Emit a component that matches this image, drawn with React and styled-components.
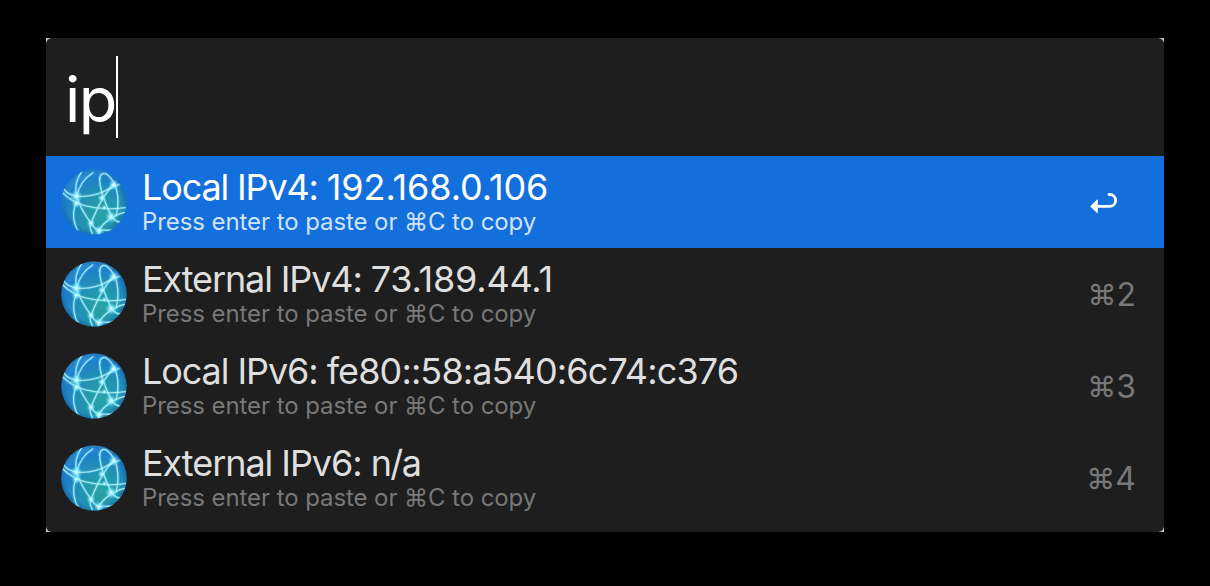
import React from "react";
import styled, { createGlobalStyle } from "styled-components";

const GlobalStyle = createGlobalStyle`
  body {
    margin: 0;
    background: #000;
    font-family: Inter, "Liberation Sans", sans-serif;
  }
`;

const Screen = styled.main`
  box-sizing: border-box;
  height: 586px;
  padding: 38px 46px 54px;
  background: #000;
`;

const Backdrop = styled.div`
  height: 494px;
  background: #c4c4c4;
`;

const Panel = styled.section`
  height: 100%;
  border-radius: 6px;
  overflow: hidden;
  background: #1e1e1e;
`;

const SearchBar = styled.div`
  display: flex;
  align-items: flex-start;
  height: 118px;
  box-sizing: border-box;
  padding: 18px 0 0 19px;
`;

const Query = styled.span`
  width: 51px;
  font-size: 63px;
  line-height: 86px;
  font-weight: 370;
  letter-spacing: -1.4px;
  color: #fff;
`;

const Caret = styled.span`
  width: 2px;
  height: 82px;
  background: #fff;
`;

const Row = styled.div`
  display: flex;
  align-items: center;
  height: 92px;
  box-sizing: border-box;
  padding: 0 28px 0 14px;
  background: ${(p) => (p.$active ? "#136fdc" : "transparent")};
`;

const Labels = styled.div`
  flex: 1;
  padding: 0 0 2px 14px;
`;

const Title = styled.div`
  font-size: 36px;
  line-height: 40px;
  font-weight: 430;
  white-space: pre;
  color: ${(p) => (p.$active ? "#fff" : "#dfdfdf")};
`;

const Tracked = styled.span`
  letter-spacing: ${(p) => p.$tracking}px;
`;

const Subtitle = styled.div`
  padding-top: 1px;
  font-size: 24px;
  line-height: 28px;
  font-weight: 440;
  letter-spacing: -0.08px;
  white-space: nowrap;
  color: ${(p) => (p.$active ? "#d0e2f8" : "#787878")};
`;

const Shortcut = styled.div`
  display: flex;
  align-items: center;
  gap: 1px;
  padding-top: 2px;
  font-size: 32px;
  line-height: 40px;
  font-weight: 440;
  color: #787878;
`;

const Modifier = styled.span`
  font-size: 29px;
  letter-spacing: -1px;
  line-height: 40px;
`;

const GlobeSvg = styled.svg`
  flex: none;
  width: 68px;
  height: 68px;
`;

const ReturnSvg = styled.svg`
  width: 28px;
  height: 24px;
  margin: 3px 18px 0 0;
`;

const arcs = [
  "M31 83C37 93 50 99 67 102C104 106 151 96 179 68",
  "M26 92C48 115 67 123 92 131C130 141 180 143 214 137",
  "M82 31C66 51 62 80 68 103C76 133 94 160 111 184C119 196 129 204 137 208",
  "M66 124C54 150 58 185 73 208",
  "M68 103C74 75 92 48 116 33",
  "M137 49C139 35 150 29 162 40C188 63 199 106 187 160",
  "M137 49C136 79 155 129 171 160C179 175 190 181 204 181",
  "M179 68C151 94 130 135 111 184C107 193 109 205 115 214",
  "M212 151C180 158 145 184 135 205L134 218",
  "M195 68C185 72 177 72 170 80",
  "M135 206C151 203 165 206 176 204",
];

const nodes = [
  [67, 103, 20],
  [67, 124, 15],
  [179, 68, 17],
  [143, 108, 13],
  [111, 184, 14],
  [171, 164, 19],
  [135, 206, 17],
  [151, 137, 9],
];

function Globe({ id }) {
  return (
    <GlobeSvg viewBox="18 18 204 204" aria-hidden="true">
      <defs>
        <radialGradient id={`${id}-sea`} cx="60%" cy="68%" r="75%">
          <stop offset="0" stopColor="#2aa5a2" />
          <stop offset="0.4" stopColor="#2392b0" />
          <stop offset="0.75" stopColor="#1f7fca" />
          <stop offset="1" stopColor="#3a9ee6" />
        </radialGradient>
        <radialGradient id={`${id}-edge`} cx="50%" cy="50%" r="50%">
          <stop offset="0.84" stopColor="#0b4f91" stopOpacity="0" />
          <stop offset="1" stopColor="#0b4f91" stopOpacity="0.4" />
        </radialGradient>
        <radialGradient id={`${id}-node`}>
          <stop offset="0" stopColor="#f2ffff" />
          <stop offset="0.35" stopColor="#a8f5ff" stopOpacity="0.75" />
          <stop offset="1" stopColor="#4bd9f5" stopOpacity="0" />
        </radialGradient>
        <clipPath id={`${id}-clip`}>
          <circle cx="120" cy="120.5" r="98" />
        </clipPath>
      </defs>
      <circle cx="120" cy="120.5" r="98" fill={`url(#${id}-sea)`} />
      <circle cx="120" cy="120.5" r="98" fill={`url(#${id}-edge)`} />
      <g clipPath={`url(#${id}-clip)`} fill="none" strokeLinecap="round">
        {arcs.map((d) => (
          <path key={d} d={d} stroke="#4fdcf5" strokeOpacity="0.25" strokeWidth="11" />
        ))}
        {arcs.map((d) => (
          <path key={d} d={d} stroke="#c4f4fc" strokeOpacity="0.82" strokeWidth="4" />
        ))}
        {nodes.map(([x, y, r]) => (
          <circle key={`${x}-${y}`} cx={x} cy={y} r={r} fill={`url(#${id}-node)`} />
        ))}
      </g>
    </GlobeSvg>
  );
}

function ReturnIcon() {
  return (
    <ReturnSvg viewBox="0 0 28 24" role="img" aria-label="Return">
      <path
        d="M6 14.3H19.2C23 14.3 25.6 11.8 25.6 8.4C25.6 5 23 2.5 19.7 2.5H19"
        fill="none"
        stroke="#fff"
        strokeWidth="2.8"
        strokeLinecap="round"
      />
      <path
        d="M1.2 13.5L7.4 7.8V20.8L1.2 15.1Q0.4 14.3 1.2 13.5Z"
        fill="#fff"
        stroke="#fff"
        strokeWidth="0.8"
        strokeLinejoin="round"
      />
    </ReturnSvg>
  );
}

const results = [
  { label: "Local IPv4: ", value: "192.168.0.106", tracking: [-1.15, -0.1] },
  { label: "External IPv4: ", value: "73.189.44.1", tracking: [-1.12, -0.2], digit: "2" },
  { label: "Local IPv6: ", value: "fe80::58:a540:6c74:c376", tracking: [-1.08, -0.88], digit: "3" },
  { label: "External IPv6: ", value: "n/a", tracking: [-1.06, -1.6], digit: "4" },
];

export default function App() {
  return (
    <>
      <GlobalStyle />
      <Screen>
        <Backdrop>
          <Panel>
            <SearchBar>
              <Query>ip</Query>
              <Caret />
            </SearchBar>
            {results.map(({ label, value, tracking, digit }, i) => (
              <Row key={label} $active={i === 0}>
                <Globe id={`globe${i}`} />
                <Labels>
                  <Title $active={i === 0}>
                    <Tracked $tracking={tracking[0]}>{label}</Tracked>
                    <Tracked $tracking={tracking[1]}>{value}</Tracked>
                  </Title>
                  <Subtitle $active={i === 0}>Press enter to paste or ⌘C to copy</Subtitle>
                </Labels>
                {digit ? (
                  <Shortcut>
                    <Modifier>⌘</Modifier>
                    <span>{digit}</span>
                  </Shortcut>
                ) : (
                  <ReturnIcon />
                )}
              </Row>
            ))}
          </Panel>
        </Backdrop>
      </Screen>
    </>
  );
}
